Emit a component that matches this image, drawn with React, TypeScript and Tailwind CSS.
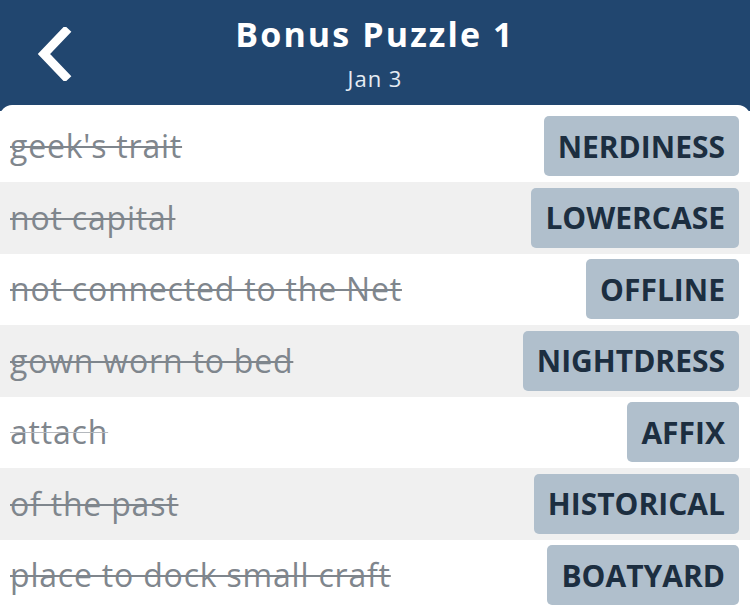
import React from "react";

const rows: { clue: string; answer: string; done: boolean }[] = [
  { clue: "geek's trait", answer: "NERDINESS", done: true },
  { clue: "not capital", answer: "LOWERCASE", done: true },
  { clue: "not connected to the Net", answer: "OFFLINE", done: true },
  { clue: "gown worn to bed", answer: "NIGHTDRESS", done: true },
  { clue: "attach", answer: "AFFIX", done: false },
  { clue: "of the past", answer: "HISTORICAL", done: true },
  { clue: "place to dock small craft", answer: "BOATYARD", done: true },
];

export default function App() {
  return (
    <div
      className="w-[750px] h-[608px] overflow-hidden bg-[#21466f]"
      style={{ fontFamily: "'Open Sans', Lato, sans-serif" }}
    >
      <div className="relative h-[105px] flex flex-col items-center text-white">
        <svg
          className="absolute left-[33px] top-[27px]"
          width="40"
          height="54"
          viewBox="0 0 40 54"
        >
          <path
            d="M32 5 L11 27 L32 49"
            fill="none"
            stroke="white"
            strokeWidth="9"
            strokeLinecap="square"
            strokeLinejoin="miter"
          />
        </svg>
        <div className="mt-[14px] text-[34px] leading-[40px] font-bold tracking-[2.1px]">
          Bonus Puzzle 1
        </div>
        <div className="text-[22px] leading-[26px] mt-[11px] tracking-[1px] text-[#e6ecf3]">
          Jan 3
        </div>
      </div>
      <div className="bg-white rounded-t-[12px] pt-[5.5px]">
        {rows.map((r, i) => (
          <div
            key={i}
            className={`h-[71.5px] flex items-center justify-between pl-[10px] pr-[11px] ${
              i % 2 === 1 ? "bg-[#f0f0f0]" : "bg-white"
            }`}
          >
            <span
              className={`text-[32px] tracking-[0.8px] text-[#7f868d] line-through ${
                r.done
                  ? "decoration-[2px] decoration-[#7f868d]"
                  : "decoration-[1px] decoration-[#b4b8bd]"
              }`}
            >
              {r.clue}
            </span>
            <span className="h-[60px] flex items-center px-[14px] rounded-[5px] bg-[#b0bfcc] text-[#1c2e40] text-[30px] font-bold">
              {r.answer}
            </span>
          </div>
        ))}
      </div>
    </div>
  );
}
